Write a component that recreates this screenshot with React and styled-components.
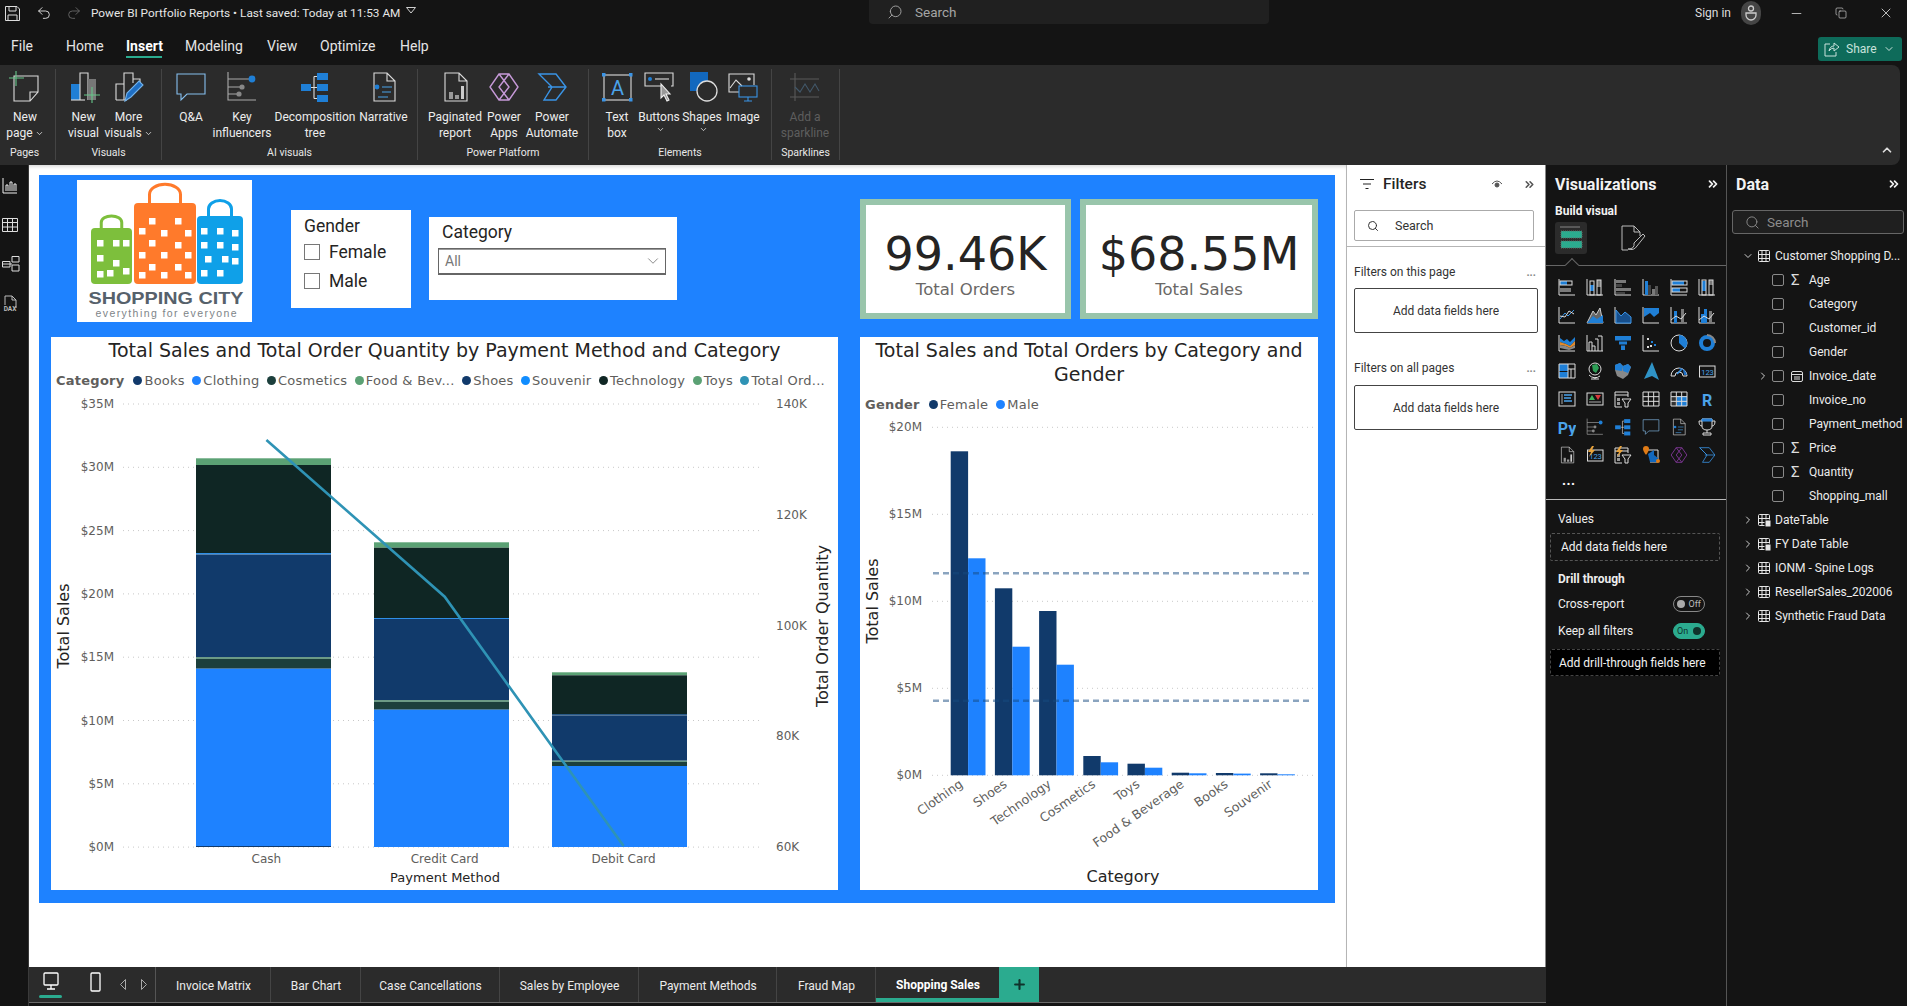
import React from "react";
import styled, { createGlobalStyle } from "styled-components";
import { ChevronDown, ChevronRight, ChevronUp, ChevronsRight, Copy, Minus, Redo2, Search, Undo2, X, Plus } from "lucide-react";

const BLUE = "#1f7fd6";
const GRAY = "#7a7a7a";
const LINE = "#dcdcdc";
const UI_FONT = `Roboto, "Liberation Sans", sans-serif`;
const CHART_FONT = `"DejaVu Sans", sans-serif`;

const GlobalStyle = createGlobalStyle`
  html, body { margin: 0; padding: 0; background: #141414; overflow: hidden; }
  * { box-sizing: border-box; }
  #root { width: 1907px; height: 1006px; font-family: ${UI_FONT}; }
`;

const Shell = styled.div`
  width: 1907px;
  height: 1006px;
  display: flex;
  flex-direction: column;
  background: #141414;
  color: #f2f2f2;
`;

/* title bar */
const TitleBar = styled.div`
  height: 32px;
  display: flex;
  align-items: flex-start;
  flex: none;
`;
const QuickTools = styled.div`
  width: 869px;
  height: 26px;
  flex: none;
  display: flex;
  align-items: center;
  padding-left: 4px;
  font-size: 11.8px;
  color: #e6e6e6;
`;
const DocName = styled.span`
  margin-left: 9px;
  white-space: nowrap;
`;
const CaretBox = styled.span`
  display: flex;
  margin-left: 6px;
  margin-top: -6px;
`;
const ToolSlot = styled.span`
  display: flex;
  margin-left: ${(p) => p.$ml || 0}px;
  color: ${(p) => p.$dim ? "#666" : "#e0e0e0"};
`;
const TopSearch = styled.div`
  width: 400px;
  height: 24px;
  flex: none;
  background: #202020;
  border-radius: 0 0 4px 4px;
  display: flex;
  align-items: center;
  padding-left: 18px;
  gap: 12px;
  font-size: 13.5px;
  color: #a5a5a5;
`;
const Flip = styled.span`
  display: flex;
  transform: scaleX(-1);
`;
const WindowTools = styled.div`
  flex: 1;
  height: 26px;
  display: flex;
  align-items: center;
  padding-left: 426px;
  font-size: 12px;
  color: #dedede;
  white-space: nowrap;
`;
const Avatar = styled.span`
  width: 20px;
  height: 24px;
  flex: none;
  border-radius: 10px;
  background: #454545;
  margin-left: 10px;
  margin-right: 13px;
  display: flex;
  align-items: center;
  justify-content: center;
`;
const WinBtn = styled.span`
  display: flex;
  width: 45px;
  flex: none;
  justify-content: center;
  color: #e6e6e6;
`;

/* menu row */
const MenuRow = styled.div`
  height: 33px;
  display: flex;
  align-items: center;
  flex: none;
  position: relative;
  padding: 0 0 5px 11px;
`;
const MenuItem = styled.span`
  position: relative;
  width: ${(p) => p.$w}px;
  font-size: 14px;
  font-weight: ${(p) => p.$on ? 700 : 400};
  color: ${(p) => p.$on ? "#fff" : "#e4e4e4"};
  &::after {
    content: "";
    display: ${(p) => p.$on ? "block" : "none"};
    position: absolute;
    left: 0;
    width: 36px;
    bottom: -4px;
    height: 2px;
    background: #2bab8f;
  }
`;
const ShareBtn = styled.div`
  margin-left: auto;
  margin-right: 5px;
  margin-top: 5px;
  width: 84px;
  height: 24px;
  border-radius: 3px;
  background: #0e6b5a;
  display: flex;
  align-items: center;
  padding-left: 6px;
  gap: 6px;
  font-size: 12px;
  color: #c9e2dc;
`;

/* ribbon */
const Ribbon = styled.div`
  height: 100px;
  width: 1900px;
  flex: none;
  background: #2b2b2b;
  border-radius: 0 8px 8px 0;
  display: flex;
  position: relative;
  padding-top: 4px;
`;
const Group = styled.div`
  width: ${(p) => p.$w}px;
  height: 91px;
  padding-left: ${(p) => p.$pl || 0}px;
  border-right: 1px solid #444;
  display: flex;
  flex-direction: column;
  flex: none;
`;
const GroupButtons = styled.div`
  display: flex;
  height: 77px;
  flex: none;
`;
const GroupName = styled.div`
  font-size: 10.5px;
  text-align: center;
  color: #e8e8e8;
  margin-left: ${(p) => -(p.$pl || 0)}px;
  padding-right: ${(p) => p.$pr || 0}px;
  line-height: 14px;
`;
const RibbonBtn = styled.div`
  width: ${(p) => p.$w}px;
  display: flex;
  flex-direction: column;
  align-items: center;
  flex: none;
  color: ${(p) => p.$dim ? "#5e5e5e" : "#ededed"};
  font-size: 12px;
  line-height: 16px;
  white-space: nowrap;
  text-align: center;
  svg.icon { height: 32px; margin-top: 2px; margin-bottom: 6px; flex: none; }
`;
const Chev = styled.span`
  display: inline-flex;
  vertical-align: middle;
  margin-left: 2px;
`;
const Collapse = styled.span`
  position: absolute;
  right: 6px;
  bottom: 8px;
  color: #ddd;
  display: flex;
`;

/* body */
const Body = styled.div`
  flex: 1;
  display: flex;
  min-height: 0;
`;
const Rail = styled.div`
  width: 29px;
  flex: none;
  padding-top: 13px;
  padding-left: 2px;
  display: flex;
  flex-direction: column;
  gap: 23px;
  color: #e4e4e4;
  border-right: 1px solid #3a3a3a;
`;
const Center = styled.div`
  width: 1517px;
  flex: none;
  display: flex;
  flex-direction: column;
`;
const Workspace = styled.div`
  height: 802px;
  display: flex;
  flex: none;
`;
const Canvas = styled.div`
  width: 1317px;
  flex: none;
  background: #fff;
  padding: 10px 0 0 10px;
  box-shadow: inset 0 4px 4px -3px #ccc;
`;
const Page = styled.div`
  width: 1296px;
  height: 728px;
  background: #1e82ff;
  display: flex;
  flex-direction: column;
`;
const TopRow = styled.div`
  height: 162px;
  display: flex;
  flex: none;
  align-items: flex-start;
`;
const Tile = styled.div`
  background: #fff;
  flex: none;
  width: ${(p) => p.$w}px;
  height: ${(p) => p.$h}px;
  margin-left: ${(p) => p.$ml}px;
  margin-top: ${(p) => p.$mt}px;
`;
const GenderTile = styled(Tile)`
  padding: 7px 0 0 13px;
  color: #252423;
`;
const SlicerTitle = styled.div`
  line-height: 18px;
  margin-bottom: ${(p) => p.$mb}px;
  font-size: 17.5px;
  color: #252423;
`;
const CheckRow = styled.div`
  display: flex;
  align-items: center;
  gap: 9px;
  height: 29px;
  font-size: 17.5px;
`;
const BoxCheck = styled.span`
  width: 16px;
  height: 16px;
  border: 1px solid #777;
  background: #fff;
`;
const CategoryTile = styled(Tile)`
  padding: 6px 10px 0 13px;
`;
const Select = styled.div`
  width: 228px;
  height: 27px;
  border: 1px solid #666;
  border-bottom-width: 2px;
  box-shadow: inset 0 1px 0 #999;
  margin-left: -4px;
  display: flex;
  align-items: center;
  justify-content: space-between;
  padding: 0 3px 0 6px;
  font-size: 14px;
  color: #777;
`;
const Kpi = styled(Tile)`
  border: 6px solid #99c5ab;
  display: flex;
  flex-direction: column;
  align-items: center;
  justify-content: center;
  font-family: ${CHART_FONT};
  padding-top: 12px;
`;
const KpiValue = styled.div`
  font-size: 46px;
  line-height: 50px;
  color: #252423;
`;
const KpiLabel = styled.div`
  font-size: 16.5px;
  line-height: 22px;
  color: #6a6866;
`;
const ChartRow = styled.div`
  display: flex;
  gap: 22px;
  padding-left: 12px;
`;
const ChartPanel = styled.div`
  width: ${(p) => p.$w}px;
  height: 553px;
  background: #fff;
  font-family: ${CHART_FONT};
  display: flex;
  flex-direction: column;
  svg { display: block; flex: none; }
`;
const ChartTitle = styled.div`
  font-size: 19px;
  line-height: 24px;
  text-align: center;
  color: #252423;
  padding: 1px 4px 0;
  height: ${(p) => p.$h}px;
  flex: none;
`;
const Legend = styled.div`
  height: 28px;
  display: flex;
  align-items: center;
  padding: ${(p) => p.$pt || 0}px 0 0 ${(p) => p.$pl}px;
  font-size: 13px;
  letter-spacing: 0.25px;
  color: #605e5c;
  white-space: nowrap;
  flex: none;
`;
const LegendTitle = styled.b`
  margin-right: 9px;
  font-weight: 700;
  color: #605e5c;
`;
const LegendItem = styled.span`
  display: flex;
  align-items: center;
  margin-right: ${(p) => p.$gap}px;
  &::before {
    content: "";
    width: 9px;
    height: 9px;
    border-radius: 50%;
    background: ${(p) => p.$c};
    margin-right: 2px;
  }
`;

/* filters */
const FiltersPane = styled.div`
  width: 200px;
  flex: none;
  background: #fff;
  border-left: 1px solid #b5b5b5;
  border-right: 1px solid #888;
  color: #252423;
  display: flex;
  flex-direction: column;
`;
const FiltersHead = styled.div`
  height: 38px;
  display: flex;
  align-items: center;
  padding-left: 13px;
  font-size: 15.5px;
  font-weight: 500;
  flex: none;
`;
const FiltersName = styled.span`
  margin-left: 9px;
  flex: 1;
`;
const HeadTool = styled.span`
  display: flex;
  margin-right: ${(p) => p.$mr}px;
  color: #555;
`;
const FilterSearch = styled.div`
  margin: 7px 0 0 7px;
  width: 180px;
  height: 31px;
  border: 1px solid #aaa;
  border-radius: 2px;
  display: flex;
  align-items: center;
  padding-left: 12px;
  gap: 16px;
  font-size: 12.5px;
  color: #333;
`;
const FilterDivider = styled.div`
  margin-top: 5px;
  border-top: 1px solid #b5b5b5;
`;
const FilterHeading = styled.div`
  margin: ${(p) => p.$mt}px 9px 0 7px;
  height: 18px;
  display: flex;
  justify-content: space-between;
  align-items: center;
  font-size: 12px;
  color: #333;
`;
const FilterDots = styled.span`
  color: #888;
  font-weight: 700;
  font-size: 11px;
`;
const DropBox = styled.div`
  margin: ${(p) => p.$mt}px 0 0 7px;
  width: 184px;
  height: 45px;
  border: 1px solid #444;
  border-radius: 2px;
  display: flex;
  align-items: center;
  justify-content: center;
  font-size: 12px;
  color: #333;
`;

/* tabs */
const TabBar = styled.div`
  height: 36px;
  background: #2b2b2b;
  border-bottom: 1px solid #6a6a6a;
  display: flex;
  flex: none;
`;
const ViewTools = styled.div`
  width: 127px;
  flex: none;
  border-right: 1px solid #555;
  position: relative;
  display: flex;
  align-items: center;
  padding-left: 13px;
  padding-bottom: 6px;
  color: #fff;
  &::after {
    content: "";
    position: absolute;
    left: 10px;
    bottom: 4px;
    width: 23px;
    height: 3px;
    border-radius: 2px;
    background: #2bab8f;
  }
`;
const ToolGap = styled.span`
  display: flex;
  margin-left: ${(p) => p.$ml}px;
  margin-top: ${(p) => p.$mt || 0}px;
  color: ${(p) => p.$c || "#fff"};
`;
const Tab = styled.div`
  width: ${(p) => p.$w}px;
  flex: none;
  display: flex;
  align-items: center;
  justify-content: center;
  font-size: 12px;
  font-weight: ${(p) => p.$on ? 700 : 400};
  color: ${(p) => p.$on ? "#fff" : "#ececec"};
  border-right: ${(p) => p.$on ? "none" : "1px solid #444"};
  border-bottom: ${(p) => p.$on ? "4px solid #2bab8f" : "none"};
  padding: ${(p) => p.$on ? 5 : 2}px 0 0 1px;
`;
const AddTab = styled.div`
  width: 40px;
  background: #2bab8f;
  display: flex;
  align-items: center;
  justify-content: center;
  color: #10322b;
`;

/* visualizations */
const VizPane = styled.div`
  width: 181px;
  flex: none;
  border-right: 1px solid #555;
  display: flex;
  flex-direction: column;
`;
const PaneHead = styled.div`
  height: 38px;
  display: flex;
  align-items: center;
  justify-content: space-between;
  padding: 0 ${(p) => p.$pr}px 0 ${(p) => p.$pl}px;
  font-size: 16px;
  font-weight: 700;
  flex: none;
  color: #f2f2f2;
`;
const BuildLabel = styled.div`
  height: 17px;
  line-height: 17px;
  padding-left: 9px;
  font-size: 12px;
  font-weight: 700;
  flex: none;
`;
const VizTabs = styled.div`
  height: 46px;
  flex: none;
  padding: 2px 0 0 9px;
  display: flex;
  align-items: flex-start;
  border-bottom: 1px solid #666;
  position: relative;
  &::after {
    content: "";
    position: absolute;
    left: 21px;
    bottom: -5px;
    width: 9px;
    height: 9px;
    background: #141414;
    border-left: 1px solid #666;
    border-top: 1px solid #666;
    transform: rotate(45deg);
  }
`;
const TabIcon = styled.span`
  width: 32px;
  height: 32px;
  border-radius: 3px;
  background: ${(p) => p.$on ? "#2b2b2b" : "transparent"};
  margin-right: ${(p) => p.$mr || 0}px;
  display: flex;
  align-items: center;
  justify-content: center;
`;
const VizGrid = styled.div`
  display: grid;
  grid-template-columns: repeat(6, 28px);
  grid-auto-rows: 28px;
  padding: 7px 0 0 7px;
  flex: none;
  justify-items: center;
  align-items: center;
`;
const MoreDots = styled.div`
  height: 31px;
  padding-left: 16px;
  font-size: 14px;
  font-weight: 700;
  line-height: 22px;
  letter-spacing: 0.5px;
  color: #fff;
  border-bottom: 1px solid #bbb;
  flex: none;
`;
const WellLabel = styled.div`
  margin: ${(p) => p.$mt}px 0 0 12px;
  height: 18px;
  line-height: 18px;
  font-size: 12px;
  font-weight: ${(p) => p.$bold ? 700 : 400};
  color: #eee;
`;
const Well = styled.div`
  margin: ${(p) => p.$mt}px 0 0 4px;
  width: 170px;
  height: ${(p) => p.$h}px;
  border: 1px dashed ${(p) => p.$dark ? "#444" : "#555"};
  border-radius: 2px;
  background: ${(p) => p.$dark ? "#000" : "transparent"};
  display: flex;
  align-items: center;
  padding-left: ${(p) => p.$pl}px;
  font-size: 12px;
  color: #f2f2f2;
  white-space: nowrap;
`;
const SwitchRow = styled.div`
  margin: ${(p) => p.$mt}px 0 0 12px;
  width: 147px;
  height: 16px;
  display: flex;
  align-items: center;
  justify-content: space-between;
  font-size: 12px;
  color: #eee;
`;
const Switch = styled.span`
  width: 32px;
  height: 16px;
  border-radius: 8px;
  border: 1px solid ${(p) => p.$on ? "#2bab8f" : "#888"};
  background: ${(p) => p.$on ? "#2bab8f" : "transparent"};
  color: ${(p) => p.$on ? "#10322b" : "#bbb"};
  display: flex;
  flex-direction: ${(p) => p.$on ? "row" : "row-reverse"};
  align-items: center;
  justify-content: space-between;
  padding: 0 3px;
  font-size: 9px;
  &::after {
    content: "";
    width: 8px;
    height: 8px;
    border-radius: 50%;
    background: ${(p) => p.$on ? "#10322b" : "#aaa"};
  }
`;

/* data */
const DataPane = styled.div`
  flex: 1;
  display: flex;
  flex-direction: column;
`;
const DataSearch = styled.div`
  margin: 7px 0 0 5px;
  width: 172px;
  height: 24px;
  border: 1px solid #666;
  border-radius: 3px;
  background: #1f1f1f;
  display: flex;
  align-items: center;
  padding-left: 12px;
  gap: 7px;
  font-size: 13.5px;
  color: #8c8c8c;
`;
const Tree = styled.div`
  margin-top: 10px;
  font-size: 12px;
  color: #ececec;
`;
const TreeRow = styled.div`
  height: 24px;
  display: flex;
  align-items: center;
  white-space: nowrap;
  padding-left: ${(p) => p.$pl}px;
`;
const ChevSlot = styled.span`
  width: ${(p) => p.$w}px;
  display: flex;
  flex: none;
  color: #ccc;
`;
const FieldCheck = styled.span`
  width: 12px;
  height: 12px;
  border: 1px solid #8a8a8a;
  border-radius: 2px;
  flex: none;
`;
const KindSlot = styled.span`
  width: 25px;
  padding-left: 7px;
  flex: none;
  display: flex;
  align-items: center;
  font-size: 15px;
  color: #ddd;
`;
const TableGlyph = styled.span`
  display: flex;
  width: 18px;
  flex: none;
`;

/* ---------- icons ---------- */
const Ic = ({ children, w = 32, h = 32, vb = "0 0 32 32", className = "icon" }) => (
  <svg className={className} width={w} height={h} viewBox={vb} fill="none" stroke={LINE} strokeWidth="1.1">
    {children}
  </svg>
);
const F = ({ x, y, w, h, c = BLUE }) => <rect x={x} y={y} width={w} height={h} fill={c} stroke="none" />;

const NewPageIcon = () => (
  <Ic>
    <path d="M5 5H29V21L21 30H5ZM29 21H21V30" />
    <path d="M0 7H15M7 0V15" stroke="#66c78a" />
  </Ic>
);
const NewVisualIcon = () => (
  <Ic>
    <F x={3} y={13} w={9} h={16} />
    <path d="M12 29V2H20V29" />
    <F x={20} y={8} w={8} h={21} c="#777" />
    <path d="M3 29H17" />
    <path d="M16 24H32M24 16V32" stroke="#66c78a" />
  </Ic>
);
const MoreVisualsIcon = () => (
  <Ic>
    <path d="M3 29V13H11M11 29V2H20V12M20 8H27V14M3 29H14" />
    <path d="M12 30L14 22L26 10L30 14L18 26Z" fill="#1f6fc4" stroke="#74b3ea" />
  </Ic>
);
const QaIcon = ({ w = 32, h = 32, className }) => (
  <Ic w={w} h={h} className={className}>
    <path d="M2 3H30V23H12L6 29V23H2Z" stroke="#86bfee" />
  </Ic>
);
const KeyInfIcon = ({ w = 32, h = 32, className }) => (
  <Ic w={w} h={h} className={className}>
    <path d="M2 1V29H30M2 8H24M2 16H14M2 23H12" stroke="#aaa" />
    <circle cx="26" cy="8" r="3.4" fill={BLUE} stroke="none" />
    <circle cx="16" cy="16" r="2.6" fill="#888" stroke="none" />
    <circle cx="13" cy="23" r="2.6" fill="#888" stroke="none" />
  </Ic>
);
const DecompIcon = ({ w = 32, h = 32, className }) => (
  <Ic w={w} h={h} className={className}>
    <F x={2} y={13} w={10} h={7} />
    <F x={18} y={2} w={11} h={7} />
    <F x={18} y={13} w={11} h={7} />
    <F x={18} y={24} w={11} h={7} />
    <path d="M12 16.5H18M15 5.5V27.5M15 5.5H18M15 27.5H18" />
  </Ic>
);
const NarrativeIcon = ({ w = 32, h = 32, className }) => (
  <Ic w={w} h={h} className={className}>
    <path d="M6 2H19L27 10V30H6ZM19 2V10H27" />
    <circle cx="9" cy="16" r="2.4" fill={BLUE} stroke="none" />
    <path d="M14 16H24M14 21H23M10 26H20" stroke="#4ba3ea" />
  </Ic>
);
const PaginatedIcon = ({ w = 32, h = 32, className }) => (
  <Ic w={w} h={h} className={className}>
    <path d="M6 2H20L28 10V30H6ZM20 2V10H28" />
    <F x={10} y={21} w={4} h={7} c="#999" />
    <F x={16} y={24} w={4} h={4} c="#999" />
    <F x={22} y={15} w={3} h={13} c="#ccc" />
  </Ic>
);
const PowerAppsIcon = ({ w = 32, h = 32, className, c = "#c79ad9" }) => (
  <Ic w={w} h={h} className={className}>
    <path d="M11 3H21L30 16L21 29H11L2 16ZM11 3L21 16L11 29M21 3L11 16L21 29" stroke={c} strokeWidth="1.4" />
  </Ic>
);
const PowerAutoIcon = ({ w = 32, h = 32, className }) => (
  <Ic w={w} h={h} className={className}>
    <path d="M3 3H20L30 16L20 29H8L16 16ZM12 16H30M3 3L16 16" stroke="#3a94e6" strokeWidth="1.4" />
  </Ic>
);
const TextBoxIcon = () => (
  <Ic>
    <rect x="3" y="4" width="27" height="25" />
    <F x={1} y={2} w={3.5} h={3.5} c="#3a94e6" />
    <F x={28} y={2} w={3.5} h={3.5} c="#3a94e6" />
    <F x={1} y={27} w={3.5} h={3.5} c="#3a94e6" />
    <F x={28} y={27} w={3.5} h={3.5} c="#3a94e6" />
    <text x="16.5" y="24" textAnchor="middle" fontSize="20" fontFamily={UI_FONT} fill="#4ba3ea" stroke="none">A</text>
  </Ic>
);
const ButtonsIcon = () => (
  <Ic>
    <path d="M18 15H2V2H30V15H28" />
    <circle cx="7" cy="8" r="2" fill={BLUE} stroke="none" />
    <path d="M12 8H26" />
    <path d="M18 13V27L21 24L24 30L26 29L23 23H27Z" fill="#999" stroke="#eee" />
  </Ic>
);
const ShapesIcon = () => (
  <Ic>
    <F x={4} y={1} w={18} h={19} c="#1268be" />
    <circle cx="21" cy="20" r="10" stroke="#ddd" fill="#2b2b2b" strokeWidth="1.3" />
  </Ic>
);
const ImageIcon = () => (
  <Ic>
    <path d="M12 21H2V3H27V14" />
    <path d="M3 17L9 9L15 15" />
    <circle cx="22" cy="8" r="1.8" fill="#ddd" stroke="none" />
    <rect x="12" y="15" width="18" height="11" stroke="#3a94e6" />
    <path d="M21 26V30M17 30H25" stroke="#3a94e6" />
  </Ic>
);
const SparkIcon = () => (
  <Ic>
    <path d="M6 2V30M1 8H30M1 26H30" stroke="#5a5a5a" />
    <path d="M6 16L11 21L16 13L21 21L26 13L30 20" stroke="#42586a" />
  </Ic>
);

const Ax = () => <path d="M1 1V17H17" />;
const GridTable = ({ x = 1, y = 2, w = 16, h = 14 }) => (
  <path d={`M${x} ${y}H${x + w}V${y + h}H${x}ZM${x} ${y + h / 3}H${x + w}M${x} ${y + (2 * h) / 3}H${x + w}M${x + w / 3} ${y}V${y + h}M${x + (2 * w) / 3} ${y}V${y + h}`} />
);
const Label = ({ x, y, s, c = "#4ba3ea", w = 400, children }) => (
  <text x={x} y={y} fontSize={s} fontWeight={w} fontFamily={UI_FONT} fill={c} stroke="none" textAnchor="middle">{children}</text>
);
const Bolt = () => <path d="M6 0L2 6H5L3 11L9 4H6L8 0Z" fill="#e8a33d" stroke="none" />;
const CardGlyph = () => (
  <>
    <rect x="1.5" y="4" width="15.5" height="11" />
    <Label x={9.5} y={12.5} s={7.5}>123</Label>
  </>
);
const SlicerGlyph = () => (
  <>
    <path d="M1 2H14V7M1 5H14M1 2V17H8" />
    <F x={3} y={8} w={3} h={3} c="#999" />
    <F x={3} y={12} w={3} h={3} c="#999" />
    <path d="M8 9H17L14 13V17H11V13Z" />
  </>
);

const vizIcons = [
  <><Ax /><F x={2} y={3} w={7} h={4} /><rect x="2" y="3" width="12" height="4" /><F x={2} y={10} w={11} h={4} c={GRAY} /></>,
  <><Ax /><F x={4} y={7} w={4} h={6} /><rect x="4" y="3" width="4" height="14" /><F x={11} y={2} w={4} h={7} c={GRAY} /><rect x="11" y="2" width="4" height="15" /></>,
  <><Ax /><F x={2} y={2} w={10} h={3} c={GRAY} /><F x={2} y={6} w={6} h={3} c="#444" /><F x={2} y={10} w={15} h={3} c={GRAY} /><F x={2} y={14} w={9} h={2} c="#444" /></>,
  <><Ax /><F x={3} y={3} w={3} h={14} /><F x={6} y={7} w={3} h={10} c="#444" /><F x={10} y={11} w={3} h={6} c={GRAY} /><F x={13} y={8} w={3} h={9} c="#555" /></>,
  <><Ax /><F x={2} y={3} w={12} h={4} /><rect x="2" y="3" width="15" height="4" /><F x={2} y={10} w={8} h={4} /><rect x="2" y="10" width="15" height="4" /></>,
  <><Ax /><F x={4} y={3} w={4} h={10} /><rect x="4" y="2" width="4" height="15" /><F x={11} y={2} w={4} h={5} c={GRAY} /><rect x="11" y="2" width="4" height="15" /></>,
  <><Ax /><path d="M2 13L7 7L10 10L16 4" stroke="#3a94e6" /><path d="M2 10L7 11L11 5L16 8" /></>,
  <><path d="M1 17L7 5L10 9L14 2L17 17Z" fill="#666" stroke="#ccc" /><path d="M1 17L7 10L11 13L17 9V17Z" fill={BLUE} stroke="none" /></>,
  <><Ax /><path d="M2 4L7 10L11 6L17 11V17H2Z" fill="#174f8c" stroke="#3a94e6" /></>,
  <><Ax /><path d="M2 2H17V7L12 11L8 7L2 11Z" fill={BLUE} stroke="none" /></>,
  <><Ax /><F x={4} y={5} w={3} h={12} /><F x={11} y={3} w={3} h={14} c={GRAY} /><path d="M1 14L6 10L11 13L16 7" /></>,
  <><Ax /><F x={3} y={8} w={3} h={9} /><F x={6} y={3} w={3} h={14} /><F x={11} y={5} w={3} h={12} c={GRAY} /><path d="M1 14L6 10L11 13L16 7" /></>,
  <><Ax /><path d="M2 4L6 7L9 5L12 8L17 3V7L12 12L8 10L2 8Z" fill={BLUE} stroke="none" /><path d="M2 8L8 10L12 12L17 7V11L12 14L8 12L2 11Z" fill="#e08a2c" stroke="none" /><path d="M2 11L8 12L12 14L17 11V14L11 16L2 14Z" fill="#888" stroke="none" /></>,
  <><Ax /><path d="M3 17V8H6V17M6 12H9V17M9 5H12V17M12 2H16V17" /></>,
  <><path d="M1 2H17V7H13V11H11V16H7V11H5V7H1Z" fill={BLUE} stroke="none" /><path d="M1 7H17M5 11H13" stroke="#141414" /></>,
  <><Ax /><F x={5} y={4} w={2} h={2} c="#ddd" /><F x={9} y={7} w={2} h={2} /><F x={12} y={10} w={2} h={2} /><F x={5} y={12} w={2} h={2} c="#ddd" /><F x={8} y={11} w={2} h={2} c="#ddd" /></>,
  <><circle cx="9" cy="9" r="8" /><path d="M9 9V1A8 8 0 0 1 15 14.5Z" fill={BLUE} stroke="none" /></>,
  <><circle cx="9" cy="9" r="6" stroke="#1f7fd6" strokeWidth="4" /><path d="M9 1A8 8 0 0 1 17 9" stroke="#888" strokeWidth="2" /></>,
  <><F x={1} y={2} w={9} h={7} /><F x={1} y={10} w={9} h={6} /><path d="M1 2H17V16H1ZM10 2V16M10 7H17M13 7V16" /></>,
  <><circle cx="9" cy="7" r="6" fill="#111" /><path d="M6 3L11 2L13 6L10 11L7 9Z" fill="#2d9d55" stroke="none" /><path d="M3 13A8 8 0 0 0 14 14M9 15V17M5 17H13" /></>,
  <><path d="M1 3L6 1L9 4L14 2L17 5L14 13L9 17L3 14L1 8Z" fill="#888" stroke="none" /><path d="M1 3L6 1L9 4L8 9L1 8Z" fill={BLUE} stroke="none" /><path d="M9 4L14 2L17 5L14 11L9 9Z" fill={BLUE} stroke="none" /></>,
  <><path d="M10 0L17 18L10 14L2 17Z" fill="#2f93c6" stroke="none" /></>,
  <><path d="M1 14A8 8 0 0 1 17 14H13A4 4 0 0 0 5 14Z" /><path d="M7 12L12 7" stroke="#3a94e6" strokeWidth="1.6" /><path d="M9 7L13 8L14 13H17A8 8 0 0 0 9 6Z" fill="#1f6fc4" stroke="none" /></>,
  <CardGlyph />,
  <><rect x="1" y="2" width="16" height="14" /><path d="M4 4V14" stroke="#aaa" /><path d="M6 5H14M6 8H13M6 11H14" stroke="#4ba3ea" strokeWidth="1.5" /></>,
  <><rect x="1" y="3" width="16" height="12" /><path d="M3 12H15" stroke="#aaa" /><path d="M3 10L6 5L9 10Z" fill="#3fb25e" stroke="none" /><path d="M9 5H15L12 10Z" fill="#d83b3b" stroke="none" /></>,
  <SlicerGlyph />,
  <GridTable />,
  <><F x={7} y={6} w={10} h={10} /><F x={1} y={6} w={5} h={10} c="#333" /><GridTable /></>,
  <Label x={9} y={15.5} s={16} w={700}>R</Label>,
  <Label x={9} y={15.5} s={16} w={700}>Py</Label>,
  <KeyInfIcon w={18} h={18} className="mini" />,
  <DecompIcon w={18} h={18} className="mini" />,
  <QaIcon w={18} h={18} className="mini" />,
  <NarrativeIcon w={18} h={18} className="mini" />,
  <><path d="M4 1H14V8Q14 12 9 12Q4 12 4 8ZM4 3H1Q1 8 4 8M14 3H17Q17 8 14 8M9 12V15M5 17H13V15H5Z" /><path d="M4 1H14V3H4Z" fill="#1f6fc4" stroke="#3a94e6" /></>,
  <PaginatedIcon w={18} h={18} className="mini" />,
  <><CardGlyph /><Bolt /></>,
  <><SlicerGlyph /><Bolt /></>,
  <><path d="M4 4H16V16H8" stroke="#ddd" /><path d="M6 8L12 4V9L16 12V16H8Z" fill="#1268be" stroke="none" /><path d="M4 0A3 3 0 0 1 7 3C7 5 4 9 4 9S1 5 1 3A3 3 0 0 1 4 0Z" fill="#e07b16" stroke="none" /><circle cx="16" cy="15" r="2" fill="#e07b16" stroke="none" /></>,
  <PowerAppsIcon w={18} h={18} className="mini" c="#8d3ba8" />,
  <PowerAutoIcon w={18} h={18} className="mini" />,
];

/* ---------- logo ---------- */
const Windows = ({ cells }) => cells.map(([x, y], i) => <rect key={i} x={x} y={y} width="6.5" height="6.5" fill="#fff" />);
const Bag = ({ x, y, w, h, c, hy, cells }) => (
  <g>
    <path d={`M${x + w * 0.25} ${y + 8}V${hy + (y - hy) * 0.5}A${w * 0.25} ${(y - hy) * 0.6} 0 0 1 ${x + w * 0.75} ${hy + (y - hy) * 0.5}V${y + 8}`} fill="none" stroke={c} strokeWidth="3" />
    <rect x={x} y={y} width={w} height={h} rx="4" fill={c} />
    <Windows cells={cells} />
  </g>
);
const Logo = () => (
  <Tile $w={175} $h={142} $ml={38} $mt={5}>
    <svg width="175" height="142" viewBox="0 0 175 142">
      <Bag x={14} y={48} w={41} h={56} c="#7dbf3c" hy={37} cells={[[20, 60], [36, 60], [46, 60], [20, 75], [36, 80], [46, 88], [30, 90], [20, 91]]} />
      <Bag x={120} y={36} w={46} h={68} c="#0fa0e8" hy={22} cells={[[124, 48], [140, 48], [155, 50], [124, 62], [140, 62], [155, 64], [128, 76], [145, 76], [124, 90], [140, 90], [155, 78]]} />
      <Bag x={57} y={23} w={62} h={81} c="#ff7a2b" hy={6} cells={[[72, 38], [98, 38], [62, 48], [84, 50], [108, 50], [72, 60], [98, 62], [62, 72], [84, 72], [108, 72], [72, 84], [98, 84], [62, 92], [84, 92], [108, 92]]} />
      <text x="89" y="124" textAnchor="middle" fontFamily="Liberation Sans" fontWeight="700" fontSize="17" fill="#56616b" textLength="155" lengthAdjust="spacingAndGlyphs">SHOPPING CITY</text>
      <text x="89" y="137" textAnchor="middle" fontFamily="Liberation Sans" fontSize="10.5" fill="#7d8488" textLength="141">everything for everyone</text>
    </svg>
  </Tile>
);

/* ---------- charts ---------- */
const stacks = [
  { x: 196, w: 135, segs: [[458.3, 465, "#5ba174"], [465, 553, "#0f2624"], [553, 554.5, "#2f8fe8"], [554.5, 657, "#113a6b"], [657, 659, "#6c9a86"], [659, 668.7, "#1c3f3c"], [668.7, 846, "#1e82ff"], [846, 847, "#113a6b"]] },
  { x: 374, w: 135, segs: [[542.3, 547.7, "#5ba174"], [547.7, 618, "#0f2624"], [618, 619, "#2f8fe8"], [619, 700, "#113a6b"], [700, 702, "#6c9a86"], [702, 709.7, "#1c3f3c"], [709.7, 847, "#1e82ff"]] },
  { x: 552, w: 135, segs: [[672.3, 675.3, "#5ba174"], [675.3, 714, "#0f2624"], [714, 715.5, "#2a5a88"], [715.5, 760.7, "#113a6b"], [760.7, 762, "#6c9a86"], [762, 766, "#1c3f3c"], [766, 847, "#1e82ff"]] },
];
const axisText = { fontFamily: CHART_FONT, fontSize: 12, fill: "#605e5c" };
const titleText = { fontFamily: CHART_FONT, fontSize: 16, fill: "#252423" };

const OrdersChart = () => (
  <svg width="787" height="496" viewBox="51 394 787 496">
    {["$35M", "$30M", "$25M", "$20M", "$15M", "$10M", "$5M", "$0M"].map((t, i) => {
      const y = 404 + i * 63.3;
      return (
        <g key={t}>
          <line x1="123" x2="763" y1={y} y2={y} stroke="#c8c8c8" strokeDasharray="1 4" />
          <text {...axisText} x="114" y={y + 4} textAnchor="end">{t}</text>
        </g>
      );
    })}
    {["140K", "120K", "100K", "80K", "60K"].map((t, i) => (
      <text key={t} {...axisText} x="776" y={404 + i * 110.75 + 4}>{t}</text>
    ))}
    {stacks.map((s) => s.segs.map(([a, b, c]) => <rect key={a} x={s.x} y={a} width={s.w} height={b - a} fill={c} />))}
    <polyline points="266.4,440 444.7,596.7 623.6,846" fill="none" stroke="#2f93b5" strokeWidth="2.6" />
    {[["Cash", 266.4], ["Credit Card", 444.7], ["Debit Card", 623.6]].map(([t, x]) => (
      <text key={t} {...axisText} x={x} y="863" textAnchor="middle">{t}</text>
    ))}
    <text {...axisText} x="445" y="882" fontSize="13" fill="#252423" textAnchor="middle">Payment Method</text>
    <text {...titleText} transform="translate(69 626) rotate(-90)" textAnchor="middle">Total Sales</text>
    <text {...titleText} transform="translate(828 626) rotate(-90)" textAnchor="middle">Total Order Quantity</text>
  </svg>
);

const genderBars = [
  ["Clothing", 451.3, 558.3],
  ["Shoes", 588.3, 646.7],
  ["Technology", 611, 664.7],
  ["Cosmetics", 756, 762.3],
  ["Toys", 763.7, 767.7],
  ["Food & Beverage", 772.7, 773.3],
  ["Books", 773, 773.6],
  ["Souvenir", 773.3, 774.3],
];
const CategoryChart = () => (
  <svg width="458" height="474" viewBox="860 416 458 474">
    {["$20M", "$15M", "$10M", "$5M", "$0M"].map((t, i) => {
      const y = 427.3 + i * 87;
      return (
        <g key={t}>
          <line x1="932" x2="1313" y1={y} y2={y} stroke="#c8c8c8" strokeDasharray="1 4" />
          <text {...axisText} x="922" y={y + 4} textAnchor="end">{t}</text>
        </g>
      );
    })}
    {genderBars.map(([name, f, m], i) => {
      const x = 950.7 + i * 44.2;
      return (
        <g key={name}>
          <rect x={x} y={f} width="17.4" height={775.3 - f} fill="#113a6b" />
          <rect x={x + 17.4} y={m} width="17.4" height={775.3 - m} fill="#1e82ff" />
          <text {...axisText} transform={`translate(${x + 13} 786) rotate(-35)`} fontSize="12.5" textAnchor="end">{name}</text>
        </g>
      );
    })}
    <line x1="933" x2="1313" y1="573.3" y2="573.3" stroke="#164a80" strokeOpacity=".5" strokeWidth="2.5" strokeDasharray="6 4" />
    <line x1="933" x2="1313" y1="700.7" y2="700.7" stroke="#164a80" strokeOpacity=".5" strokeWidth="2.5" strokeDasharray="6 4" />
    <text {...titleText} transform="translate(878 601) rotate(-90)" textAnchor="middle">Total Sales</text>
    <text {...titleText} x="1123" y="882" textAnchor="middle">Category</text>
  </svg>
);

/* ---------- data ---------- */
const ribbonGroups = [
  { name: "Pages", w: 56, pl: 0, namePr: 6, items: [{ w: 50, icon: <NewPageIcon />, text: "New", sub: "page", chev: true }] },
  { name: "Visuals", w: 106, pl: 5, items: [
    { w: 45, icon: <NewVisualIcon />, text: "New", sub: "visual" },
    { w: 45, icon: <MoreVisualsIcon />, text: "More", sub: "visuals", chev: true },
  ] },
  { name: "AI visuals", w: 256, pl: 4, items: [
    { w: 50, icon: <QaIcon />, text: "Q&A" },
    { w: 52, icon: <KeyInfIcon />, text: "Key", sub: "influencers" },
    { w: 94, icon: <DecompIcon />, text: "Decomposition", sub: "tree" },
    { w: 43, icon: <NarrativeIcon />, text: "Narrative" },
  ] },
  { name: "Power Platform", w: 171, pl: 9, items: [
    { w: 56, icon: <PaginatedIcon />, text: "Paginated", sub: "report" },
    { w: 42, icon: <PowerAppsIcon />, text: "Power", sub: "Apps" },
    { w: 54, icon: <PowerAutoIcon />, text: "Power", sub: "Automate" },
  ] },
  { name: "Elements", w: 183, pl: 8, items: [
    { w: 40, icon: <TextBoxIcon />, text: "Text", sub: "box" },
    { w: 44, icon: <ButtonsIcon />, text: "Buttons", only: true },
    { w: 42, icon: <ShapesIcon />, text: "Shapes", only: true },
    { w: 40, icon: <ImageIcon />, text: "Image" },
  ] },
  { name: "Sparklines", w: 68, pl: 3, items: [
    { w: 60, icon: <SparkIcon />, text: "Add a", sub: "sparkline", dim: true },
  ] },
];
const menus = [["File", 55], ["Home", 60], ["Insert", 59, true], ["Modeling", 82], ["View", 53], ["Optimize", 80], ["Help", 40]];
const tabs = [["Invoice Matrix", 115], ["Bar Chart", 90], ["Case Cancellations", 139], ["Sales by Employee", 139], ["Payment Methods", 138], ["Fraud Map", 99], ["Shopping Sales", 123, true]];
const fields = [["Age", true], ["Category"], ["Customer_id"], ["Gender"], ["Invoice_date", false, true], ["Invoice_no"], ["Payment_method"], ["Price", true], ["Quantity", true], ["Shopping_mall"]];
const tables = [["DateTable", true], ["FY Date Table", true], ["IONM - Spine Logs"], ["ResellerSales_202006"], ["Synthetic Fraud Data"]];
const categories = [["Books", "#113a6b"], ["Clothing", "#1e82ff"], ["Cosmetics", "#1c3f3c"], ["Food & Bev...", "#5ba174"], ["Shoes", "#113a6b"], ["Souvenir", "#118dff"], ["Technology", "#0f2624"], ["Toys", "#5ba174"], ["Total Ord...", "#2f93b5"]];

const TableMark = ({ calc }) => (
  <svg width="14" height="14" viewBox="0 0 14 14" fill="none" stroke="#e6e6e6">
    <path d="M1.5 2.5Q1.5 1.5 2.5 1.5H11.5Q12.5 1.5 12.5 2.5V11.5Q12.5 12.5 11.5 12.5H2.5Q1.5 12.5 1.5 11.5ZM1.5 5.5H12.5M1.5 9.5H12.5M5 1.5V12.5M9 1.5V12.5" />
    {calc && <path d="M8 7H14V14H8Z" fill="#e6e6e6" stroke="#141414" />}
  </svg>
);
const PageArrow = ({ left }) => (
  <svg width="6" height="11" viewBox="0 0 6 11" fill="none" stroke="#aaa">
    <path d={left ? "M5.5 .5V10.5L.5 5.5Z" : "M.5 .5V10.5L5.5 5.5Z"} />
  </svg>
);

export default function App() {
  return (
    <Shell>
      <GlobalStyle />
      <TitleBar>
        <QuickTools>
          <svg width="17" height="17" viewBox="0 0 17 17" fill="none" stroke="#ddd">
            <path d="M1.5 1.5H13L15.5 4V15.5H1.5ZM5 1.5V6H12V1.5M4 15.5V10H13V15.5" />
          </svg>
          <ToolSlot $ml={15}><Undo2 size={16} strokeWidth={1.4} /></ToolSlot>
          <ToolSlot $ml={14} $dim><Redo2 size={16} strokeWidth={1.4} /></ToolSlot>
          <DocName>Power BI Portfolio Reports • Last saved: Today at 11:53 AM</DocName>
          <CaretBox>
            <svg width="10" height="7" viewBox="0 0 10 7" fill="none" stroke="#cfcfcf"><path d="M.5 .5H9.5L5 6ZM.5 .5" /></svg>
          </CaretBox>
        </QuickTools>
        <TopSearch>
          <Flip><Search size={16} strokeWidth={1.4} /></Flip>
          Search
        </TopSearch>
        <WindowTools>
          Sign in
          <Avatar>
            <svg width="12" height="16" viewBox="0 0 12 16" fill="none" stroke="#ccc" strokeWidth="1.3">
              <circle cx="6" cy="3.5" r="2.5" />
              <path d="M1 8H11V10A5 5 0 0 1 1 10Z" />
            </svg>
          </Avatar>
          <WinBtn><Minus size={15} strokeWidth={1.2} /></WinBtn>
          <WinBtn><Copy size={12} strokeWidth={1.2} /></WinBtn>
          <WinBtn><X size={16} strokeWidth={1.2} /></WinBtn>
        </WindowTools>
      </TitleBar>

      <MenuRow>
        {menus.map(([t, w, on]) => <MenuItem key={t} $w={w} $on={on}>{t}</MenuItem>)}
        <ShareBtn>
          <svg width="16" height="16" viewBox="0 0 16 16" fill="none" stroke="#c9e2dc">
            <path d="M6 3H1V15H12V11M5 10Q6 5 10 5V2L15 6L10 10V7Q7 7 5 10Z" />
          </svg>
          Share
          <ChevronDown size={12} />
        </ShareBtn>
      </MenuRow>

      <Ribbon>
        {ribbonGroups.map((g) => (
          <Group key={g.name} $w={g.w} $pl={g.pl}>
            <GroupButtons>
              {g.items.map((b) => (
                <RibbonBtn key={b.text + b.sub} $w={b.w} $dim={b.dim}>
                  {b.icon}
                  <span>{b.text}</span>
                  {b.sub && <span>{b.sub}{b.chev && <Chev><ChevronDown size={9} /></Chev>}</span>}
                  {b.only && <Chev><ChevronDown size={9} /></Chev>}
                </RibbonBtn>
              ))}
            </GroupButtons>
            <GroupName $pl={g.pl} $pr={g.namePr}>{g.name}</GroupName>
          </Group>
        ))}
        <Collapse><ChevronUp size={14} strokeWidth={3} /></Collapse>
      </Ribbon>

      <Body>
        <Rail>
          <svg width="16" height="16" viewBox="0 0 16 16" fill="none" stroke="#eee"><path d="M1 0V15H15M4 13V7H6V13M8 13V4H10V13M12 13V6H14V13" /></svg>
          <svg width="16" height="16" viewBox="0 0 16 16" fill="none" stroke="#ddd"><path d="M.5 1.5H15.5V14.5H.5ZM.5 5.5H15.5M.5 10H15.5M5.5 1.5V14.5M10.5 1.5V14.5" /></svg>
          <svg width="18" height="16" viewBox="0 0 18 16" fill="none" stroke="#ddd"><path d="M.5 5.5H8V11H.5ZM10 .5H17V6H10ZM10 9H17V15H10ZM8 8H10M.5 8H8" /></svg>
          <svg width="16" height="18" viewBox="0 0 16 18">
            <path d="M3 10V1H10L14 5V13M10 1V5H14" fill="none" stroke="#bbb" />
            <text x="8" y="16" fontSize="6.5" textAnchor="middle" fontFamily={UI_FONT} fontWeight="700" fill="#bbb">DAX</text>
          </svg>
        </Rail>

        <Center>
          <Workspace>
            <Canvas>
              <Page>
                <TopRow>
                  <Logo />
                  <GenderTile $w={120} $h={98} $ml={39} $mt={35}>
                    <SlicerTitle $mb={2}>Gender</SlicerTitle>
                    <CheckRow><BoxCheck />Female</CheckRow>
                    <CheckRow><BoxCheck />Male</CheckRow>
                  </GenderTile>
                  <CategoryTile $w={248} $h={83} $ml={18} $mt={42}>
                    <SlicerTitle $mb={7}>Category</SlicerTitle>
                    <Select>
                      All
                      <ChevronDown size={18} strokeWidth={1} color="#666" />
                    </Select>
                  </CategoryTile>
                  <Kpi $w={211} $h={120} $ml={183} $mt={24}>
                    <KpiValue>99.46K</KpiValue>
                    <KpiLabel>Total Orders</KpiLabel>
                  </Kpi>
                  <Kpi $w={238} $h={120} $ml={9} $mt={24}>
                    <KpiValue>$68.55M</KpiValue>
                    <KpiLabel>Total Sales</KpiLabel>
                  </Kpi>
                </TopRow>
                <ChartRow>
                  <ChartPanel $w={787}>
                    <ChartTitle $h={29}>Total Sales and Total Order Quantity by Payment Method and Category</ChartTitle>
                    <Legend $pl={5}>
                      <LegendTitle>Category</LegendTitle>
                      {categories.map(([t, c]) => <LegendItem key={t} $c={c} $gap={7.5}>{t}</LegendItem>)}
                    </Legend>
                    <OrdersChart />
                  </ChartPanel>
                  <ChartPanel $w={458}>
                    <ChartTitle $h={51}>Total Sales and Total Orders by Category and Gender</ChartTitle>
                    <Legend $pl={5} $pt={4}>
                      <LegendTitle>Gender</LegendTitle>
                      <LegendItem $c="#113a6b" $gap={8}>Female</LegendItem>
                      <LegendItem $c="#1e82ff" $gap={0}>Male</LegendItem>
                    </Legend>
                    <CategoryChart />
                  </ChartPanel>
                </ChartRow>
              </Page>
            </Canvas>

            <FiltersPane>
              <FiltersHead>
                <svg width="14" height="12" viewBox="0 0 14 12" fill="none" stroke="#222" strokeWidth="1.2"><path d="M0 1.5H14M3 6H11M5.5 10.5H8.5" /></svg>
                <FiltersName>Filters</FiltersName>
                <HeadTool $mr={20}>
                  <svg width="12" height="10" viewBox="0 0 12 10" fill="none" stroke="#555"><path d="M1 5Q6 -1 11 5" /><circle cx="6" cy="6" r="2" fill="#555" /></svg>
                </HeadTool>
                <HeadTool $mr={9}><ChevronsRight size={13} strokeWidth={3} /></HeadTool>
              </FiltersHead>
              <FilterSearch>
                <Search size={12} />
                Search
              </FilterSearch>
              <FilterDivider />
              <FilterHeading $mt={16}>Filters on this page<FilterDots>...</FilterDots></FilterHeading>
              <DropBox $mt={7}>Add data fields here</DropBox>
              <FilterHeading $mt={26}>Filters on all pages<FilterDots>...</FilterDots></FilterHeading>
              <DropBox $mt={8}>Add data fields here</DropBox>
            </FiltersPane>
          </Workspace>

          <TabBar>
            <ViewTools>
              <svg width="18" height="20" viewBox="0 0 18 20" fill="none" stroke="#fff" strokeWidth="1.3"><rect x="2" y="1" width="14" height="12" rx="1" /><path d="M9 13V17M5 17H13" /></svg>
              <ToolGap $ml={30}>
                <svg width="11" height="20" viewBox="0 0 11 20" fill="none" stroke="#fff" strokeWidth="1.3"><rect x="1" y="1" width="9" height="18" rx="1" /></svg>
              </ToolGap>
              <ToolGap $ml={19} $mt={6}><PageArrow left /></ToolGap>
              <ToolGap $ml={15} $mt={6}><PageArrow /></ToolGap>
            </ViewTools>
            {tabs.map(([t, w, on]) => <Tab key={t} $w={w} $on={on}>{t}</Tab>)}
            <AddTab><Plus size={15} strokeWidth={3.4} /></AddTab>
          </TabBar>
        </Center>

        <VizPane>
          <PaneHead $pl={9} $pr={6}>Visualizations<ChevronsRight size={14} strokeWidth={3} /></PaneHead>
          <BuildLabel>Build visual</BuildLabel>
          <VizTabs>
            <TabIcon $on $mr={30}>
              <svg width="26" height="26" viewBox="0 0 26 26">
                <path d="M2 2H22" stroke="#888" />
                <rect x="3" y="6" width="21" height="7" fill="#2bab8f" stroke="#666" strokeDasharray="1 1" />
                <rect x="3" y="16" width="21" height="7" fill="#2bab8f" stroke="#666" strokeDasharray="1 1" />
              </svg>
            </TabIcon>
            <TabIcon>
              <svg width="26" height="28" viewBox="0 0 26 28" fill="none" stroke="#bbb">
                <path d="M8 26H2V2H14L20 8V12M14 2V8H20" />
                <path d="M8 25Q15 25 14 19L23 10L25 12L17 22Q14 27 8 25Z" fill="#141414" />
              </svg>
            </TabIcon>
          </VizTabs>
          <VizGrid>
            {vizIcons.map((icon, i) => (
              <svg key={i} width="18" height="18" viewBox="0 0 18 18" fill="none" stroke="#dcdcdc" strokeWidth="1">{icon}</svg>
            ))}
          </VizGrid>
          <MoreDots>...</MoreDots>
          <WellLabel $mt={10}>Values</WellLabel>
          <Well $mt={5} $h={28} $pl={10}>Add data fields here</Well>
          <WellLabel $mt={9} $bold>Drill through</WellLabel>
          <SwitchRow $mt={8}>Cross-report<Switch>Off</Switch></SwitchRow>
          <SwitchRow $mt={11}>Keep all filters<Switch $on>On</Switch></SwitchRow>
          <Well $mt={10} $h={27} $pl={8} $dark>Add drill-through fields here</Well>
        </VizPane>

        <DataPane>
          <PaneHead $pl={9} $pr={6}>Data<ChevronsRight size={14} strokeWidth={3} /></PaneHead>
          <DataSearch><Search size={15} strokeWidth={1.5} />Search</DataSearch>
          <Tree>
            <TreeRow $pl={15}>
              <ChevSlot $w={15}><ChevronDown size={12} /></ChevSlot>
              <TableGlyph><TableMark /></TableGlyph>
              Customer Shopping D...
            </TreeRow>
            {fields.map(([name, sigma, expand]) => (
              <TreeRow key={name} $pl={30}>
                <ChevSlot $w={15}>{expand && <ChevronRight size={12} />}</ChevSlot>
                <FieldCheck />
                <KindSlot>{sigma ? "Σ" : expand ? <svg width="12" height="12" viewBox="0 0 12 12" fill="none" stroke="#ddd"><rect x=".5" y="1.5" width="11" height="10" rx="1.5" /><path d="M.5 4.5H11.5M3 7H9M3 9H9" /></svg> : ""}</KindSlot>
                {name}
              </TreeRow>
            ))}
            {tables.map(([name, calc]) => (
              <TreeRow key={name} $pl={15}>
                <ChevSlot $w={15}><ChevronRight size={12} /></ChevSlot>
                <TableGlyph><TableMark calc={calc} /></TableGlyph>
                {name}
              </TreeRow>
            ))}
          </Tree>
        </DataPane>
      </Body>
    </Shell>
  );
}
